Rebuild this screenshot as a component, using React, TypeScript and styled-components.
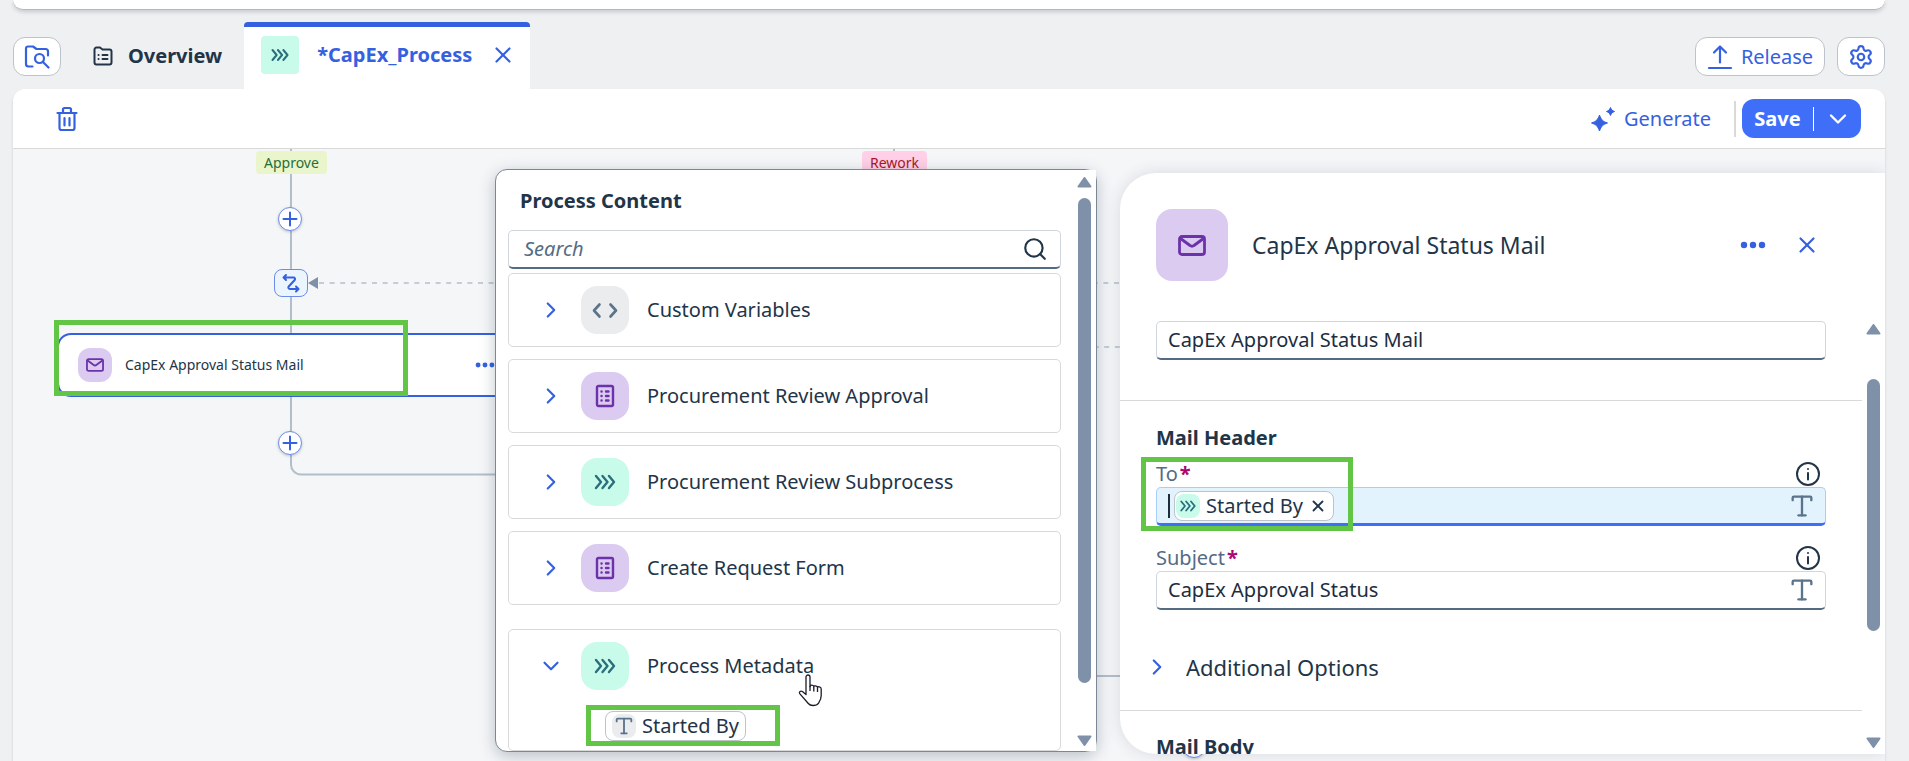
import React from "react";
import styled, { createGlobalStyle, css } from "styled-components";
import { Search, Settings, Type, X, ChevronDown, ChevronRight } from "lucide-react";

const GlobalStyle = createGlobalStyle`
  * { box-sizing: border-box; }
  body {
    margin: 0;
    background: #eff0f2;
    color: #223548;
    font: 20px/24px "Noto Sans", "Open Sans", sans-serif;
    overflow: hidden;
  }
  button, input { font: inherit; color: inherit; }
  button { margin: 0; padding: 0; border: 0; background: none; cursor: pointer; }
  h1, h2, h3, p { margin: 0; }
`;

const blue = "#3561e0";
const slate = "#7f91a9";
const line = "#d9d9d9";

/* ---------- icons ---------- */

const Chevrons = ({ size }: { size: number }) => (
  <svg width={size} height={size} viewBox="0 0 24 24" fill="none" stroke="#2c6f7c" strokeWidth="2.4" strokeLinecap="round" strokeLinejoin="round" aria-hidden>
    <path d="M3 6l5 6-5 6M9.500 6l5 6-5 6M16 6l5 6-5 6" />
  </svg>
);

const FolderSearchIcon = () => (
  <svg width="26" height="26" viewBox="0 0 26 26" fill="none" stroke={blue} strokeWidth="2.200" strokeLinecap="round" strokeLinejoin="round" aria-hidden>
    <path d="M8.500 22.500H4.500a2.500 2.500 0 0 1-2.500-2.500V4.500a2 2 0 0 1 2-2h5l3.500 2.500h9a2.500 2.500 0 0 1 2.500 2.500v4" />
    <circle cx="15.500" cy="14.500" r="4.500" />
    <path d="M19 18l5.500 5.500" />
  </svg>
);

const FolderListIcon = () => (
  <svg width="20" height="20" viewBox="0 0 20 20" fill="none" stroke="#223548" strokeWidth="2" strokeLinecap="round" strokeLinejoin="round" aria-hidden>
    <path d="M1.500 4V3.500a2 2 0 0 1 2-2h3.500l2.500 2h7a2 2 0 0 1 2 2v11a2 2 0 0 1-2 2h-13a2 2 0 0 1-2-2z" />
    <path d="M5.500 9h.1M5.500 13h.1M9.500 9h5M9.500 13h5" />
  </svg>
);

const TrashIcon = () => (
  <svg width="22" height="26" viewBox="0 0 22 26" fill="none" stroke={blue} strokeWidth="2.200" strokeLinecap="round" strokeLinejoin="round" aria-hidden>
    <path d="M1.500 7h19M7 6.500V3.500a1.500 1.500 0 0 1 1.500-1.500h5a1.500 1.500 0 0 1 1.500 1.500v3M3.500 7.500v14.500a2 2 0 0 0 2 2h11a2 2 0 0 0 2-2V7.500M8.500 12v7.500M13.500 12v7.500" />
  </svg>
);

const ReleaseIcon = () => (
  <svg width="26" height="26" viewBox="0 0 26 26" fill="none" stroke={blue} strokeWidth="2.200" strokeLinecap="round" strokeLinejoin="round" aria-hidden>
    <path d="M2 24h22M13 18.500V2.500M7 8.500l6-6 6 6" />
  </svg>
);

const SparkleIcon = () => (
  <svg width="26" height="26" viewBox="0 0 26 26" fill={blue} stroke={blue} strokeWidth="1" strokeLinejoin="round" aria-hidden>
    <path d="M9.500 9c1.800 4.800 3 6.200 8 8-5 1.800-6.200 3.200-8 8-1.800-4.800-3-6.200-8-8 5-1.800 6.200-3.200 8-8z" />
    <path d="M20.500 1.500c1 2.500 1.600 3.100 4 4-2.400.9-3 1.500-4 4-1-2.500-1.600-3.100-4-4 2.400-.9 3-1.500 4-4z" />
  </svg>
);

const CodeIcon = () => (
  <svg width="26" height="26" viewBox="0 0 26 26" fill="none" stroke="#5b738b" strokeWidth="2.600" strokeLinecap="round" strokeLinejoin="round" aria-hidden>
    <path d="M7.500 7.500L2 13.500l5.500 6M18.500 7.500l5.500 6-5.500 6" />
  </svg>
);

const FormIcon = () => (
  <svg width="20" height="24" viewBox="0 0 20 24" fill="none" stroke="#6c32a9" strokeWidth="2.400" strokeLinecap="round" strokeLinejoin="round" aria-hidden>
    <rect x="2" y="2" width="16" height="20" rx="1.500" />
    <path d="M6.500 7.500h.1M6.500 12h.1M6.500 16.500h.1M11 7.500h2.500M11 12h2.500M11 16.500h2.500" />
  </svg>
);

const EnvelopeIcon = ({ width, height }: { width: number; height: number }) => (
  <svg width={width} height={height} viewBox="0 0 28 21" fill="none" stroke="#6c32a9" strokeWidth="2.800" strokeLinecap="round" strokeLinejoin="round" aria-hidden>
    <rect x="1.500" y="1.500" width="25" height="18" rx="2.500" />
    <path d="M2.500 3.500l9.500 7a3.200 3.200 0 0 0 4 0l9.500-7" />
  </svg>
);

const LoopIcon = () => (
  <svg width="18" height="20" viewBox="0 0 18 20" fill="none" stroke={blue} strokeWidth="2" strokeLinecap="round" strokeLinejoin="round" aria-hidden>
    <path d="M1.500 4.500h10a1.500 1.500 0 0 1 1.200 2.500l-6 6.500a1.500 1.500 0 0 0 1.200 2.500h8.500M4 2L1.500 4.500 4 7M14 13.500l2.500 2.500-2.500 2.500" />
  </svg>
);

const PlusIcon = () => (
  <svg width="16" height="16" viewBox="0 0 16 16" fill="none" stroke={blue} strokeWidth="2" strokeLinecap="round" aria-hidden>
    <path d="M8 1.500v13M1.500 8h13" />
  </svg>
);

const DotsIcon = ({ width }: { width: number }) => (
  <svg width={width} height="8" viewBox="0 0 26 8" fill={blue} aria-hidden>
    <circle cx="4" cy="4" r="3.200" /><circle cx="13" cy="4" r="3.200" /><circle cx="22" cy="4" r="3.200" />
  </svg>
);

const InfoIcon = () => (
  <svg width="24" height="24" viewBox="0 0 24 24" fill="none" stroke="#223548" strokeWidth="2" strokeLinecap="round" aria-hidden>
    <circle cx="12" cy="12" r="11" /><path d="M12 11v6.500M12 7v.1" />
  </svg>
);

const HandCursor = () => (
  <svg width="28" height="34" viewBox="0 0 28 34" fill="#fff" stroke="#1c1c2b" strokeWidth="1.300" strokeLinejoin="round" aria-hidden>
    <path d="M9 18.500V4a2 2 0 0 1 4 0v9.500c0-2 3.800-2 3.800.3 0-1.600 3.700-1.300 3.700.8 0-1.400 3.700-1.200 3.700 1.400v6.500c0 4-1.300 5.500-2.800 7.800-1.100 1.700-3 2.200-5.400 2.200s-3.700-.7-4.700-2L2.700 20.600c-1-1.700 1-3.300 2.700-2l3.600 3z" />
    <path d="M13 13v5M16.800 14v4.500M20.500 15v4" fill="none" />
  </svg>
);

/* ---------- page frame ---------- */

const Page = styled.div`
  display: flex;
  flex-direction: column;
  height: 100vh;
  padding: 0 24px 0 13px;
`;

const TopStrip = styled.div`
  flex: none;
  height: 10px;
  border-radius: 0 0 12px 12px;
  background: #fff;
  border-bottom: 1px solid #b5b8bd;
  box-shadow: 0 2px 4px rgba(34, 53, 72, 0.2);
`;

const TabRow = styled.header`
  flex: none;
  display: flex;
  align-items: flex-end;
  height: 79px;
`;

const ToolButton = styled.button<{ $wide?: boolean }>`
  display: flex;
  align-items: center;
  justify-content: center;
  width: ${(p) => (p.$wide ? "130px" : "48px")};
  height: 39px;
  gap: 8px;
  margin-bottom: 13px;
  border: 1px solid #bcc3ca;
  border-radius: 12px;
  background: #fff;
  color: ${blue};
`;

const TabButton = styled.button`
  display: flex;
  align-items: center;
  gap: 15px;
  height: 66px;
  margin: 0 22px 0 32px;
  font-weight: 700;
`;

const ActiveTab = styled.div`
  display: flex;
  align-items: center;
  height: 67px;
  padding: 0 14px 6px 17px;
  border-top: 5px solid ${blue};
  border-radius: 4px 4px 0 0;
  background: #fff;
  color: ${blue};
  font-weight: 700;
  gap: 18px;
`;

const TabBadge = styled.span`
  display: grid;
  place-items: center;
  width: 38px;
  height: 38px;
  border-radius: 4px;
  background: #c9fbeb;
`;

const IconButton = styled.button`
  display: grid;
  place-items: center;
  color: ${blue};
`;

const TabActions = styled.div`
  display: flex;
  gap: 12px;
  margin-left: auto;
`;

const Content = styled.main`
  flex: 1;
  min-height: 0;
  display: flex;
  flex-direction: column;
  border-radius: 12px 12px 0 0;
  background: #fff;
  box-shadow: 0 2px 3px rgba(34, 53, 72, 0.16);
`;

const Toolbar = styled.div`
  flex: none;
  display: flex;
  align-items: center;
  height: 60px;
  padding: 0 24px 0 43px;
  border-bottom: 1px solid ${line};
`;

const GenerateButton = styled.button`
  display: flex;
  align-items: center;
  gap: 8px;
  margin-left: auto;
  color: ${blue};
`;

const ToolbarDivider = styled.span`
  width: 2px;
  height: 36px;
  margin: 0 6px 0 23px;
  background: ${line};
`;

const SplitButton = styled.div`
  display: flex;
  align-items: center;
  height: 39px;
  border-radius: 12px;
  background: #3f6ff9;
  color: #fff;
`;

const SaveButton = styled.button`
  width: 72px;
  height: 24px;
  border-right: 1px solid #fff;
  font-weight: 700;
`;

const SaveMenuButton = styled.button`
  display: grid;
  place-items: center;
  width: 47px;
  height: 28px;
`;

/* ---------- flow canvas ---------- */

const Workspace = styled.div`
  flex: 1;
  min-height: 0;
  position: relative;
  display: flex;
  justify-content: flex-end;
  gap: 23px;
  padding: 20px 0 7px;
  overflow: hidden;
  background: #f5f6f8;
`;

const Flow = styled.div`
  position: absolute;
  inset: 0;
`;

const Edges = styled.svg`
  position: absolute;
  inset: 0;
  width: 100%;
  height: 100%;
`;

const at = css<{ $x: number; $y: number }>`
  position: absolute;
  left: ${(p) => p.$x}px;
  top: ${(p) => p.$y}px;
`;

const BranchTag = styled.span<{ $x: number; $y: number; $tone: "ok" | "back" }>`
  ${at}
  padding: 0 8px;
  border-radius: 4px;
  background: ${(p) => (p.$tone === "ok" ? "#ebf5cb" : "#ffd0e7")};
  color: ${(p) => (p.$tone === "ok" ? "#256f3a" : "#aa161f")};
  font-size: 14px;
  line-height: 23px;
`;

const AddNode = styled.button<{ $x: number; $y: number }>`
  ${at}
  display: grid;
  place-items: center;
  width: 24px;
  height: 24px;
  border: 1px solid #6c8bea;
  border-radius: 50%;
  background: #fff;
  box-shadow: 0 1px 3px rgba(34, 53, 72, 0.25);
`;

const GatewayNode = styled.button<{ $x: number; $y: number }>`
  ${at}
  display: grid;
  place-items: center;
  width: 34px;
  height: 28px;
  border: 1px solid #6c8bea;
  border-radius: 8px;
  background: #ebf5fe;
`;

const StepNode = styled.div<{ $x: number; $y: number }>`
  ${at}
  display: flex;
  align-items: center;
  gap: 13px;
  width: 470px;
  height: 64px;
  padding: 0 30px 0 19px;
  border: 2px solid ${blue};
  border-radius: 14px;
  background: #fff;
  font-size: 14px;
`;

const StepBadge = styled.span`
  display: grid;
  place-items: center;
  width: 34px;
  height: 34px;
  border-radius: 12px;
  background: #dccbf1;
`;

const StepMenu = styled(IconButton)`
  margin-left: auto;
`;

const Highlight = styled.span<{ $x: number; $y: number; $w: number; $h: number }>`
  ${at}
  width: ${(p) => p.$w}px;
  height: ${(p) => p.$h}px;
  border: 5px solid #62c546;
  pointer-events: none;
`;

/* ---------- scroll bars ---------- */

const ScrollColumn = styled.div<{ $inset: string }>`
  flex: none;
  display: flex;
  flex-direction: column;
  align-items: center;
  gap: 10px;
  padding: ${(p) => p.$inset};
  background: #fff;
`;

const ScrollTrack = styled.div<{ $offset: number }>`
  flex: 1;
  width: 13px;
  padding-top: ${(p) => p.$offset}px;
`;

const ScrollThumb = styled.div<{ $size: string }>`
  height: ${(p) => p.$size};
  border-radius: 7px;
  background: ${slate};
`;

const ScrollArrow = ({ down }: { down?: boolean }) => (
  <svg width="15" height="11" viewBox="0 0 15 11" fill={slate} stroke={slate} strokeWidth="2" strokeLinejoin="round" aria-hidden>
    <path d={down ? "M1.500 1.500h12l-6 8.500z" : "M1.500 9.500h12l-6-8.500z"} />
  </svg>
);

const ScrollBar = ({ inset, offset, size }: { inset: string; offset: number; size: string }) => (
  <ScrollColumn $inset={inset}>
    <ScrollArrow />
    <ScrollTrack $offset={offset}><ScrollThumb $size={size} /></ScrollTrack>
    <ScrollArrow down />
  </ScrollColumn>
);

/* ---------- process content popover ---------- */

const Popover = styled.section`
  position: relative;
  flex: 0 1 602px;
  display: flex;
  margin-bottom: 2px;
  border: 1px solid #7b8794;
  border-radius: 12px;
  background: #fff;
  box-shadow: 0 4px 16px rgba(34, 53, 72, 0.28);
`;

const PopoverBody = styled.div`
  flex: 1;
  min-width: 0;
  padding: 0 16px 0 12px;
  border-radius: 12px 0 0 12px;
  overflow: hidden;
`;

const PopoverTitle = styled.h2`
  padding: 19px 12px 17px;
  font-size: 20px;
  line-height: 24px;
`;

const fieldBox = css`
  display: flex;
  align-items: center;
  height: 39px;
  border: 1px solid #d0d6dd;
  border-bottom: 2px solid #556b82;
  border-radius: 5px;
  background: #fff;
`;

const SearchBox = styled.label`
  ${fieldBox}
  padding: 0 12px 0 15px;
  color: #223548;
`;

const BareInput = styled.input`
  flex: 1;
  min-width: 0;
  height: 100%;
  padding: 0 0 2px;
  border: 0;
  outline: 0;
  background: transparent;
  &::placeholder { color: #556b82; font-style: italic; opacity: 1; }
`;

const EntryList = styled.div`
  display: flex;
  flex-direction: column;
  gap: 12px;
  padding-top: 4px;
`;

const EntryCard = styled.div<{ $apart?: boolean }>`
  flex: none;
  margin-top: ${(p) => (p.$apart ? "12px" : "0")};
  border: 1px solid ${line};
  border-radius: 5px;
`;

const EntryButton = styled.button`
  display: flex;
  align-items: center;
  width: 100%;
  height: 72px;
  padding-left: 29px;
  text-align: left;
  color: #223548;
  & > svg { color: ${blue}; flex: none; }
`;

const tones = { grey: "#eaecee", purple: "#dccbf1", mint: "#c9fbeb" };

const EntryBadge = styled.span<{ $tone: keyof typeof tones }>`
  display: grid;
  place-items: center;
  flex: none;
  width: 48px;
  height: 48px;
  margin: 0 18px 0 17px;
  border-radius: 16px;
  background: ${(p) => tones[p.$tone]};
`;

const EntryChildren = styled.div`
  height: 48px;
  padding: 9px 0 0 96px;
`;

const Token = styled.button<{ $flat?: boolean }>`
  position: relative;
  display: flex;
  align-items: center;
  gap: 6px;
  height: 30px;
  padding: 0 6px;
  border: 1px solid #bcc3ca;
  border-radius: 8px;
  background: #fff;
  color: #223548;
`;

const TokenBadge = styled.span<{ $tone: keyof typeof tones }>`
  display: grid;
  place-items: center;
  width: 24px;
  height: 24px;
  border-radius: 8px;
  background: ${(p) => tones[p.$tone]};
`;

const Pointer = styled.span`
  position: absolute;
  left: 301px;
  top: 503px;
  height: 34px;
`;

/* ---------- inspector ---------- */

const Inspector = styled.aside`
  flex: 0 1 765px;
  display: flex;
  flex-direction: column;
  margin-top: 4px;
  border-radius: 36px 0 0 36px;
  background: #fff;
  box-shadow: 0 0 16px rgba(34, 53, 72, 0.14);
  overflow: hidden;
  position: relative;
`;

const InspectorHead = styled.div`
  flex: none;
  display: flex;
  align-items: center;
  height: 144px;
  padding: 0 65px 0 36px;
`;

const HeadBadge = styled.span`
  display: grid;
  place-items: center;
  width: 72px;
  height: 72px;
  border-radius: 16px;
  background: #dccbf1;
`;

const HeadTitle = styled.h1`
  flex: 1;
  margin-left: 24px;
  font-size: 23px;
  line-height: 32px;
  font-weight: 400;
`;

const HeadActions = styled.div`
  display: flex;
  gap: 28px;
`;

const InspectorBody = styled.div`
  flex: 1;
  min-height: 0;
  display: flex;
`;

const Form = styled.form`
  flex: 1;
  min-width: 0;
  overflow: hidden;
`;

const FormSection = styled.section<{ $pad: string }>`
  padding: ${(p) => p.$pad};
  border-bottom: 1px solid ${line};
`;

const SectionTitle = styled.h2`
  margin-bottom: 12px;
  font-size: 20px;
  line-height: 24px;
`;

const TextBox = styled.div<{ $focused?: boolean }>`
  ${fieldBox}
  padding: 0 9px 0 11px;
  color: #1d2d3e;
  ${(p) => p.$focused && css`
    border-color: #a6cdfb;
    border-bottom: 3px solid #3f6ff9;
    background: #e3f3fe;
  `}
`;

const LabelRow = styled.div<{ $spaced?: boolean }>`
  display: flex;
  align-items: center;
  justify-content: space-between;
  height: 24px;
  margin: ${(p) => (p.$spaced ? "20px" : "0")} 6px 1px 0;
`;

const FieldLabel = styled.label`
  color: #556b82;
  &::after { content: "*"; margin-left: 2px; color: #aa0870; font-weight: 700; }
`;

const Caret = styled.span`
  width: 2px;
  height: 24px;
  margin-right: 4px;
  background: #1d2d3e;
`;

const FieldToken = styled(Token)`
  flex: none;
  padding: 0 6px 0 1px;
`;

const TypeGlyph = styled(Type)`
  flex: none;
  color: #5b738b;
`;

const MoreButton = styled.button`
  display: flex;
  align-items: center;
  gap: 16px;
  height: 48px;
  margin: 33px 0 19px -12px;
  font-size: 22px;
  color: #223548;
  & > svg { color: ${blue}; }
`;

type Entry = { label: string; tone: keyof typeof tones; icon: React.ReactNode };

const entries: Entry[] = [
  { label: "Custom Variables", tone: "grey", icon: <CodeIcon /> },
  { label: "Procurement Review Approval", tone: "purple", icon: <FormIcon /> },
  { label: "Procurement Review Subprocess", tone: "mint", icon: <Chevrons size={24} /> },
  { label: "Create Request Form", tone: "purple", icon: <FormIcon /> },
];

export default function App() {
  return (
    <Page>
      <GlobalStyle />
      <TopStrip />
      <TabRow>
        <ToolButton aria-label="Browse artifacts"><FolderSearchIcon /></ToolButton>
        <TabButton><FolderListIcon />Overview</TabButton>
        <ActiveTab>
          <TabBadge><Chevrons size={20} /></TabBadge>
          <span>*CapEx_Process</span>
          <IconButton aria-label="Close tab"><X size={26} strokeWidth={2} /></IconButton>
        </ActiveTab>
        <TabActions>
          <ToolButton $wide><ReleaseIcon />Release</ToolButton>
          <ToolButton aria-label="Settings"><Settings size={26} strokeWidth={2} /></ToolButton>
        </TabActions>
      </TabRow>

      <Content>
        <Toolbar>
          <IconButton aria-label="Delete"><TrashIcon /></IconButton>
          <GenerateButton><SparkleIcon />Generate</GenerateButton>
          <ToolbarDivider />
          <SplitButton>
            <SaveButton>Save</SaveButton>
            <SaveMenuButton aria-label="More save options"><ChevronDown size={28} strokeWidth={2} /></SaveMenuButton>
          </SplitButton>
        </Toolbar>

        <Workspace>
          <Flow>
            <Edges fill="none" stroke="#b3becb" strokeWidth="2">
              <path d="M278 0V315a10 10 0 0 0 10 10.500H482M881 0V20M1070 527H1120" />
              <path d="M306 134H1200M1070 198H1200" strokeWidth="1.500" strokeDasharray="5 5.600" />
              <path d="M295 134l10-6v12z" fill={slate} stroke="none" />
            </Edges>
            <BranchTag $x={243} $y={2} $tone="ok">Approve</BranchTag>
            <BranchTag $x={849} $y={2} $tone="back">Rework</BranchTag>
            <AddNode $x={265} $y={58} aria-label="Add step"><PlusIcon /></AddNode>
            <GatewayNode $x={261} $y={120} aria-label="Gateway"><LoopIcon /></GatewayNode>
            <StepNode $x={44} $y={184}>
              <StepBadge><EnvelopeIcon width={18} height={14} /></StepBadge>
              CapEx Approval Status Mail
              <StepMenu aria-label="Step menu"><DotsIcon width={20} /></StepMenu>
            </StepNode>
            <AddNode $x={265} $y={282} aria-label="Add step"><PlusIcon /></AddNode>
            <AddNode $x={1169} $y={585} aria-label="Add step"><PlusIcon /></AddNode>
            <Highlight $x={41} $y={171} $w={354} $h={76} />
          </Flow>

          <Popover>
            <PopoverBody>
              <PopoverTitle>Process Content</PopoverTitle>
              <SearchBox>
                <BareInput type="search" placeholder="Search" aria-label="Search process content" />
                <Search size={26} strokeWidth={2} />
              </SearchBox>
              <EntryList>
                {entries.map((e) => (
                  <EntryCard key={e.label}>
                    <EntryButton aria-expanded={false}>
                      <ChevronRight size={26} strokeWidth={2} />
                      <EntryBadge $tone={e.tone}>{e.icon}</EntryBadge>
                      {e.label}
                    </EntryButton>
                  </EntryCard>
                ))}
                <EntryCard $apart>
                  <EntryButton aria-expanded>
                    <ChevronDown size={26} strokeWidth={2} />
                    <EntryBadge $tone="mint"><Chevrons size={24} /></EntryBadge>
                    Process Metadata
                  </EntryButton>
                  <EntryChildren>
                    <Token>
                      <TokenBadge $tone="grey"><Type size={22} strokeWidth={2} color="#5b738b" /></TokenBadge>
                      Started By
                      <Highlight $x={-20} $y={-7} $w={194} $h={41} />
                    </Token>
                  </EntryChildren>
                </EntryCard>
              </EntryList>
            </PopoverBody>
            <ScrollBar inset="7px 4px 5px 0" offset={0} size="92%" />
            <Pointer><HandCursor /></Pointer>
          </Popover>

          <Inspector>
            <InspectorHead>
              <HeadBadge><EnvelopeIcon width={28} height={21} /></HeadBadge>
              <HeadTitle>CapEx Approval Status Mail</HeadTitle>
              <HeadActions>
                <IconButton aria-label="More"><DotsIcon width={26} /></IconButton>
                <IconButton aria-label="Close"><X size={26} strokeWidth={2} /></IconButton>
              </HeadActions>
            </InspectorHead>
            <InspectorBody>
              <Form>
                <FormSection $pad="4px 36px 40px">
                  <TextBox><BareInput aria-label="Step name" defaultValue="CapEx Approval Status Mail" /></TextBox>
                </FormSection>
                <FormSection $pad="25px 36px 0">
                  <SectionTitle>Mail Header</SectionTitle>
                  <LabelRow><FieldLabel htmlFor="mail-to">To</FieldLabel><InfoIcon /></LabelRow>
                  <TextBox $focused>
                    <Caret />
                    <FieldToken type="button">
                      <TokenBadge $tone="mint"><Chevrons size={18} /></TokenBadge>
                      Started By
                      <X size={18} strokeWidth={2.4} />
                      <Highlight $x={-34} $y={-35} $w={212} $h={74} />
                    </FieldToken>
                    <BareInput id="mail-to" />
                    <TypeGlyph size={28} strokeWidth={2} />
                  </TextBox>
                  <LabelRow $spaced><FieldLabel htmlFor="mail-subject">Subject</FieldLabel><InfoIcon /></LabelRow>
                  <TextBox>
                    <BareInput id="mail-subject" defaultValue="CapEx Approval Status" />
                    <TypeGlyph size={28} strokeWidth={2} />
                  </TextBox>
                  <MoreButton type="button"><ChevronRight size={26} strokeWidth={2} />Additional Options</MoreButton>
                </FormSection>
                <FormSection $pad="24px 36px 0">
                  <SectionTitle>Mail Body</SectionTitle>
                </FormSection>
              </Form>
              <ScrollBar inset="7px 4px 6px" offset={34} size="252px" />
            </InspectorBody>
          </Inspector>
        </Workspace>
      </Content>
    </Page>
  );
}
